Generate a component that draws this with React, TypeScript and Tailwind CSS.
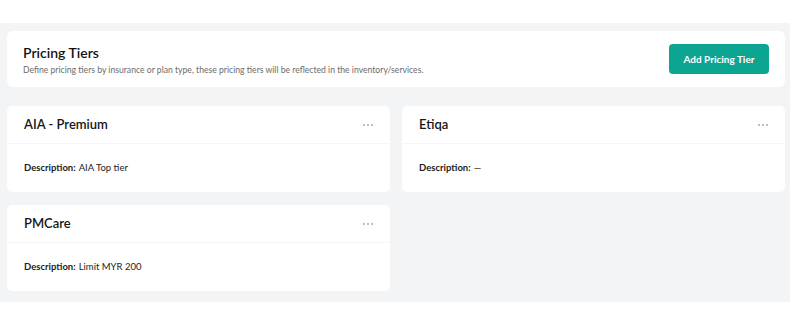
import React from "react";

const tiers = [
  { name: "AIA - Premium", description: "AIA Top tier" },
  { name: "Etiqa", description: "—" },
  { name: "PMCare", description: "Limit MYR 200" },
];

const Dots = () => (
  <svg width="12" height="4" viewBox="0 0 12 4" className="text-gray-400">
    <circle cx="2" cy="2" r="0.9" fill="currentColor" />
    <circle cx="6" cy="2" r="0.9" fill="currentColor" />
    <circle cx="10" cy="2" r="0.9" fill="currentColor" />
  </svg>
);

const TierCard = ({ name, description }: { name: string; description: string }) => (
  <div className="bg-white rounded-[5px] h-[86px] flex flex-col">
    <div className="h-[38px] flex items-center justify-between pl-[17px] pr-[16px] border-b border-[#f4f5f7]">
      <div className="text-[13px] font-semibold text-[#161616]">{name}</div>
      <Dots />
    </div>
    <div className="flex-1 flex items-center pl-[17px] text-[9.5px] text-[#222]">
      <span className="font-bold mr-[3px]">Description:</span>
      <span>{description}</span>
    </div>
  </div>
);

export default function App() {
  return (
    <div className="w-[790px] h-[328px] bg-white" style={{ fontFamily: "Lato, 'Open Sans', sans-serif" }}>
      <div className="h-[23px]" />
      <div className="bg-[#f3f4f6] pl-[7px] pr-[5px] pt-[8px] pb-[11px] flex flex-col gap-[19px]">
        <div className="bg-white rounded-[6px] h-[56px] flex items-center justify-between pl-[16px] pr-[16px]">
          <div className="flex flex-col pt-[2px]">
            <div className="text-[14px] font-semibold text-[#111] leading-[18px]">Pricing Tiers</div>
            <div className="text-[8.65px] text-[#6b6b6b] leading-[14px] mt-[1px]">
              Define pricing tiers by insurance or plan type, these pricing tiers will be reflected in the inventory/services.
            </div>
          </div>
          <button className="bg-[#0ba592] text-white text-[10px] font-bold rounded-[4px] w-[100px] h-[30px]">
            Add Pricing Tier
          </button>
        </div>
        <div className="grid grid-cols-2 gap-x-[12px] gap-y-[13px]">
          {tiers.map((t) => (
            <TierCard key={t.name} name={t.name} description={t.description} />
          ))}
        </div>
      </div>
    </div>
  );
}
